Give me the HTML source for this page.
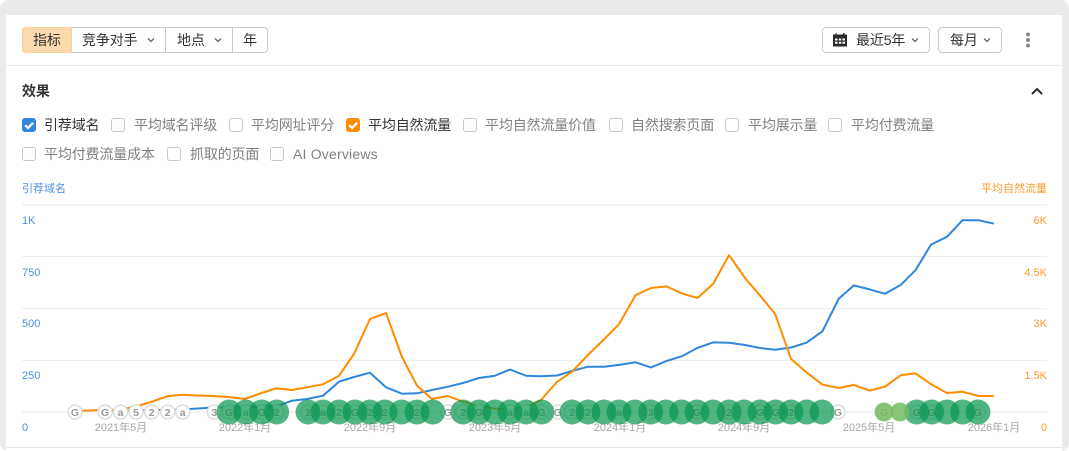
<!DOCTYPE html>
<html lang="zh"><head><meta charset="utf-8"><title>效果</title>
<style>
html,body{margin:0;padding:0;background:#fff}
body{width:1069px;height:451px;overflow:hidden;position:relative;font-family:"Liberation Sans","Noto Sans CJK SC",sans-serif;font-size:14px;color:#333}
.frame{position:absolute;left:0;top:0;width:1069px;height:451px;background:#e9eaec;border-radius:9px}
.card{position:absolute;left:6px;top:15px;width:1056px;height:436px;background:#fff}
.t{position:absolute;white-space:nowrap;line-height:20px;letter-spacing:-.15px}
.hl{position:absolute;height:1px;background:#ececec}
.btn{position:absolute;top:27px;height:24px;border:1px solid #c9cbcd;border-radius:4px;background:#fff}
.seg{position:absolute;top:28px;width:1px;height:24px;background:#c9cbcd}
.cb{position:absolute;width:12px;height:12px;border:1px solid #c8c8c8;border-radius:3px;background:#fff}
.g{color:#808080}
svg{position:absolute;left:0;top:0}
</style></head><body>
<div class="frame"></div>
<div class="card"></div>
<div class="hl" style="left:6px;top:65px;width:1056px"></div>
<div class="hl" style="left:6px;top:447px;width:1056px;background:#e6e6e6"></div>

<div class="btn" style="left:22px;width:244px"></div>
<div style="position:absolute;left:22px;top:27px;width:50px;height:26px;background:#fdd9ae;border:0;border-radius:4px 0 0 4px;box-sizing:border-box;box-shadow:inset 0 0 0 1px #f5cfa2"></div>
<div class="seg" style="left:165px"></div>
<div class="seg" style="left:232px"></div>
<div class="t" style="left:33px;top:30px">指标</div>
<div class="t" style="left:82px;top:30px">竞争对手</div>
<div class="t" style="left:177px;top:30px">地点</div>
<div class="t" style="left:243px;top:30px">年</div>

<div class="btn" style="left:822px;width:106px"></div>
<div class="btn" style="left:938px;width:62px"></div>
<div class="t" style="left:856px;top:30px">最近5年</div>
<div class="t" style="left:950px;top:30px">每月</div>

<div class="t" style="left:22px;top:81px;font-weight:700">效果</div>

<div class="cb" style="left:22px;top:118px;background:#2f87dc;border-color:#2f87dc"></div>
<div class="t" style="left:44px;top:115px">引荐域名</div>
<div class="cb" style="left:111px;top:118px"></div>
<div class="t g" style="left:134px;top:115px">平均域名评级</div>
<div class="cb" style="left:229px;top:118px"></div>
<div class="t g" style="left:251px;top:115px">平均网址评分</div>
<div class="cb" style="left:346px;top:118px;background:#ff8c00;border-color:#ff8c00"></div>
<div class="t" style="left:368px;top:115px">平均自然流量</div>
<div class="cb" style="left:463px;top:118px"></div>
<div class="t g" style="left:485px;top:115px">平均自然流量价值</div>
<div class="cb" style="left:609px;top:118px"></div>
<div class="t g" style="left:631px;top:115px">自然搜索页面</div>
<div class="cb" style="left:725px;top:118px"></div>
<div class="t g" style="left:748px;top:115px">平均展示量</div>
<div class="cb" style="left:828px;top:118px"></div>
<div class="t g" style="left:851px;top:115px">平均付费流量</div>

<div class="cb" style="left:22px;top:147px"></div>
<div class="t g" style="left:44px;top:144px">平均付费流量成本</div>
<div class="cb" style="left:167px;top:147px"></div>
<div class="t g" style="left:190px;top:144px">抓取的页面</div>
<div class="cb" style="left:270px;top:147px"></div>
<div class="t g" style="left:293px;top:144px;letter-spacing:.2px">AI Overviews</div>

<svg width="1069" height="451" viewBox="0 0 1069 451" xmlns="http://www.w3.org/2000/svg" font-family="'Liberation Sans','Noto Sans CJK SC',sans-serif">
<style>
.ch{fill:none;stroke:#555;stroke-width:1.2}
.s{fill:#fff;stroke:#dddddd;stroke-width:1.5}
.l{font-size:10.5px;font-weight:700;fill:#9a9a9a;text-anchor:middle}
.b{fill:#0a9650;fill-opacity:.71}
.lg{fill:#75ba63;fill-opacity:.85}
.bt{font-size:11px;fill:#4a90e2}
.ot{font-size:11px;fill:#ff9a2e;text-anchor:end}
.xt{font-size:11px;fill:#a8a8a8;text-anchor:middle}
</style>
<!-- icons -->
<path d="M25.200 125.200l2.800 2.800 5.200-5.200" fill="none" stroke="#fff" stroke-width="2.300"/>
<path d="M349.200 125.200l2.800 2.800 5.200-5.200" fill="none" stroke="#fff" stroke-width="2.300"/>
<path class="ch" d="M148 38.500l3 3 3-3"/>
<path class="ch" d="M215 38.500l3 3 3-3"/>
<path class="ch" d="M912 38.500l3 3 3-3"/>
<path class="ch" d="M984 38.500l3 3 3-3"/>
<path d="M835.500 33v1.500h-2.500v12h14v-12h-2.500v-1.500h-1.500v1.500h-6.500v-1.500z" fill="#26282b"/>
<path d="M835 38.500h2.500v2h-2.500zM838.800 38.500h2.500v2h-2.500zM842.500 38.500h2.500v2h-2.500zM835 41.800h2.500v2h-2.500zM838.800 41.800h2.500v2h-2.500zM842.500 41.800h2.500v2h-2.500z" fill="#fff"/>
<circle cx="1028" cy="34.500" r="2" fill="#8a8a8a"/><circle cx="1028" cy="40" r="2" fill="#8a8a8a"/><circle cx="1028" cy="45.500" r="2" fill="#8a8a8a"/>
<path d="M1032 94l5-5 5 5" fill="none" stroke="#26282b" stroke-width="2"/>
<!-- grid -->
<rect x="22" y="204" width="1025" height="2" fill="#f4f4f4"/>
<rect x="22" y="256" width="1025" height="1" fill="#eeeeee"/>
<rect x="22" y="308" width="1025" height="1" fill="#eeeeee"/>
<rect x="22" y="360" width="1025" height="1" fill="#eeeeee"/>
<rect x="22" y="411" width="1025" height="2" fill="#f2f2f2"/>
<!-- labels -->
<text class="bt" x="22" y="192">引荐域名</text>
<text class="ot" x="1047" y="192">平均自然流量</text>
<text class="bt" x="22" y="224">1K</text>
<text class="bt" x="22" y="276">750</text>
<text class="bt" x="22" y="327">500</text>
<text class="bt" x="22" y="379">250</text>
<text class="bt" x="22" y="431">0</text>
<text class="ot" x="1047" y="224">6K</text>
<text class="ot" x="1047" y="276">4.5K</text>
<text class="ot" x="1047" y="327">3K</text>
<text class="ot" x="1047" y="379">1.5K</text>
<text class="ot" x="1047" y="431">0</text>
<text class="xt" x="121" y="431">2021年5月</text>
<text class="xt" x="245" y="431">2022年1月</text>
<text class="xt" x="370" y="431">2022年9月</text>
<text class="xt" x="495" y="431">2023年5月</text>
<text class="xt" x="620" y="431">2024年1月</text>
<text class="xt" x="744" y="431">2024年9月</text>
<text class="xt" x="869" y="431">2025年5月</text>
<text class="xt" x="994" y="431">2026年1月</text>
<!-- lines -->
<polyline fill="none" stroke="#2f87dc" stroke-width="2" stroke-linejoin="round" points="105,411 120,411 136,410.500 151,410 167,410 182,409.500 198,408.500 213,407.500 229,407.500 245,407 260,407 276,406.500 292,400.700 307,399 323,395.700 339,381.700 354,377 370,372.700 386,387.300 402,393.700 417,393.300 432,390 448,386.700 463,383 479,378 495,375.700 510,369.500 526,375.700 541,376.300 557,375.500 572,371 588,366.700 604,366.700 620,364.700 635.500,362.300 651,367.400 666.500,361 682,356.200 697.600,347.800 713,342.400 729,342.700 745,345 760,348 775,349.800 791,347.500 806.500,342.700 822.400,331.300 838.600,298.900 853.800,285.400 869.600,289.400 885,293.800 901,284.700 915.500,270.200 931,244.600 947,236.800 962.400,220.300 978.600,220.300 993.800,223.600"/>
<polyline fill="none" stroke="#ff8c00" stroke-width="2" stroke-linejoin="round" points="75,411 105,410 120,409.500 136,406.500 151,402 167,396.300 182,394.700 198,395.500 213,396 229,397 245,399 260,393.500 276,388.300 292,390 307,387.300 323,384.300 339,375.700 354,354 370,319 386,313 402,357 417,385.700 432,399 448,396 463,401.700 479,406 495,408.700 510,409 526,407 541,400 557,381.900 572,371.800 588,354.900 604,339.400 619,324.200 635.500,295.200 651,288 666.500,286.400 682,293.500 697.600,297.900 713,284 729,255.200 745,278 760,295.500 775,313.700 791,358.900 806.500,372.400 822.400,384.600 838.600,388 853.800,384.900 869.600,390.600 885,386.600 901,375.100 915.500,373.400 931,384.200 947,393 962.400,391.700 978.600,396 993.800,396"/>
<!-- white markers -->
<circle class="s" cx="75" cy="412" r="7"/><text class="l" x="75" y="415.800">G</text>
<circle class="s" cx="105" cy="412" r="7"/><text class="l" x="105" y="415.800">G</text>
<circle class="s" cx="120.500" cy="412" r="7"/><text class="l" x="120.500" y="415.800">a</text>
<circle class="s" cx="136" cy="412" r="7"/><text class="l" x="136" y="415.800">5</text>
<circle class="s" cx="151.700" cy="412" r="7"/><text class="l" x="151.700" y="415.800">2</text>
<circle class="s" cx="167.700" cy="412" r="7"/><text class="l" x="167.700" y="415.800">2</text>
<circle class="s" cx="182.700" cy="412" r="7"/><text class="l" x="182.700" y="415.800">a</text>
<circle class="s" cx="214.300" cy="412" r="7"/><text class="l" x="214.300" y="415.800">3</text>
<circle class="s" cx="229" cy="412" r="7"/><text class="l" x="229" y="415.800">G</text>
<circle class="s" cx="245.700" cy="412" r="7"/><text class="l" x="245.700" y="415.800">a</text>
<circle class="s" cx="261.700" cy="412" r="7"/><text class="l" x="261.700" y="415.800">G</text>
<circle class="s" cx="276.700" cy="412" r="7"/><text class="l" x="276.700" y="415.800">2</text>
<circle class="s" cx="308" cy="412" r="7"/><text class="l" x="308" y="415.800">2</text>
<circle class="s" cx="323" cy="412" r="7"/><text class="l" x="323" y="415.800">a</text>
<circle class="s" cx="339" cy="412" r="7"/><text class="l" x="339" y="415.800">2</text>
<circle class="s" cx="355" cy="412" r="7"/><text class="l" x="355" y="415.800">G</text>
<circle class="s" cx="370" cy="412" r="7"/><text class="l" x="370" y="415.800">2</text>
<circle class="s" cx="385" cy="412" r="7"/><text class="l" x="385" y="415.800">2</text>
<circle class="s" cx="417" cy="412" r="7"/><text class="l" x="417" y="415.800">2</text>
<circle class="s" cx="448" cy="412" r="7"/><text class="l" x="448" y="415.800">G</text>
<circle class="s" cx="463" cy="412" r="7"/><text class="l" x="463" y="415.800">2</text>
<circle class="s" cx="479" cy="412" r="7"/><text class="l" x="479" y="415.800">G</text>
<circle class="s" cx="510" cy="412" r="7"/><text class="l" x="510" y="415.800">a</text>
<circle class="s" cx="526" cy="412" r="7"/><text class="l" x="526" y="415.800">a</text>
<circle class="s" cx="541.700" cy="412" r="7"/><text class="l" x="541.700" y="415.800">G</text>
<circle class="s" cx="557.700" cy="412" r="7"/><text class="l" x="557.700" y="415.800">G</text>
<circle class="s" cx="572" cy="412" r="7"/><text class="l" x="572" y="415.800">2</text>
<circle class="s" cx="588" cy="412" r="7"/><text class="l" x="588" y="415.800">2</text>
<circle class="s" cx="619" cy="412" r="7"/><text class="l" x="619" y="415.800">a</text>
<circle class="s" cx="650.700" cy="412" r="7"/><text class="l" x="650.700" y="415.800">3</text>
<circle class="s" cx="697" cy="412" r="7"/><text class="l" x="697" y="415.800">G</text>
<circle class="s" cx="729" cy="412" r="7"/><text class="l" x="729" y="415.800">2</text>
<circle class="s" cx="760" cy="412" r="7"/><text class="l" x="760" y="415.800">G</text>
<circle class="s" cx="775.700" cy="412" r="7"/><text class="l" x="775.700" y="415.800">G</text>
<circle class="s" cx="791" cy="412" r="7"/><text class="l" x="791" y="415.800">2</text>
<circle class="s" cx="838" cy="412" r="7"/><text class="l" x="838" y="415.800">G</text>
<circle class="s" cx="884" cy="412" r="7"/><text class="l" x="884" y="415.800">G</text>
<circle class="s" cx="916.700" cy="412" r="7"/><text class="l" x="916.700" y="415.800">G</text>
<circle class="s" cx="931.700" cy="412" r="7"/><text class="l" x="931.700" y="415.800">G</text>
<circle class="s" cx="978" cy="412" r="7"/><text class="l" x="978" y="415.800">G</text>
<!-- green overlays -->
<g class="b">
<circle cx="229" cy="412" r="12.500"/><circle cx="245.700" cy="412" r="12.500"/><circle cx="261.700" cy="412" r="12.500"/><circle cx="276.700" cy="412" r="12.500"/>
<circle cx="308" cy="412" r="12.500"/><circle cx="323" cy="412" r="12.500"/><circle cx="339" cy="412" r="12.500"/><circle cx="355" cy="412" r="12.500"/><circle cx="370" cy="412" r="12.500"/><circle cx="385" cy="412" r="12.500"/><circle cx="401.700" cy="412" r="12.500"/><circle cx="417" cy="412" r="12.500"/><circle cx="432.700" cy="412" r="12.500"/>
<circle cx="463" cy="412" r="12.500"/><circle cx="479" cy="412" r="12.500"/><circle cx="495" cy="412" r="12.500"/><circle cx="510" cy="412" r="12.500"/><circle cx="526" cy="412" r="12.500"/><circle cx="541.700" cy="412" r="12.500"/>
<circle cx="572" cy="412" r="12.500"/><circle cx="588" cy="412" r="12.500"/><circle cx="604" cy="412" r="12.500"/><circle cx="619" cy="412" r="12.500"/><circle cx="635" cy="412" r="12.500"/><circle cx="650.700" cy="412" r="12.500"/><circle cx="666" cy="412" r="12.500"/><circle cx="681.700" cy="412" r="12.500"/><circle cx="697" cy="412" r="12.500"/><circle cx="713" cy="412" r="12.500"/><circle cx="729" cy="412" r="12.500"/><circle cx="744" cy="412" r="12.500"/><circle cx="760" cy="412" r="12.500"/><circle cx="775.700" cy="412" r="12.500"/><circle cx="791" cy="412" r="12.500"/><circle cx="806.700" cy="412" r="12.500"/><circle cx="822" cy="412" r="12.500"/>
<circle cx="916.700" cy="412" r="12.500"/><circle cx="931.700" cy="412" r="12.500"/><circle cx="947" cy="412" r="12.500"/><circle cx="962.700" cy="412" r="12.500"/><circle cx="978" cy="412" r="12.500"/>
</g>
<circle class="lg" cx="884" cy="412" r="9.500"/><circle class="lg" cx="900" cy="412" r="9.500"/>
</svg>
</body></html>
